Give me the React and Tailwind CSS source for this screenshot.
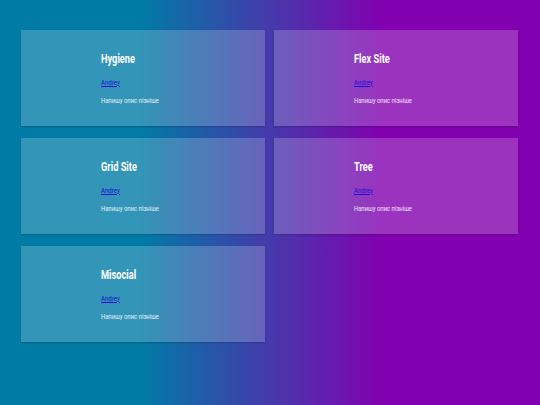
export default function App() {
  const items = ["Hygiene", "Flex Site", "Grid Site", "Tree", "Misocial"];
  return (
    <div
      className="min-h-screen w-full bg-[linear-gradient(90deg,#007ba5_26%,#8200b0_71%)] pt-[30px] pl-[21px] pr-[22px] pb-[30px]"
      style={{ fontFamily: "Roboto, 'Noto Sans', sans-serif" }}
    >
      <div className="grid grid-cols-2 gap-x-[9px] gap-y-[12px]">
        {items.map((t) => (
          <div
            key={t}
            className="h-[96px] bg-white/20 shadow-[0_1px_2px_rgba(0,0,0,0.2)] pt-[21px] pl-[80px]"
          >
            <h2 className="text-[12px] leading-[16px] font-bold text-white origin-left scale-x-[0.77]">
              {t}
            </h2>
            <div className="mt-[10.5px] text-[8px] leading-[10px] origin-left scale-x-[0.76]">
              <a href="#" className="text-[#1a0dd6] underline">Andrey</a>
            </div>
            <p className="mt-[8px] text-[8px] leading-[10px] text-white/85 origin-left scale-x-[0.73]">
              Напишу опис пізніше
            </p>
          </div>
        ))}
      </div>
    </div>
  );
}
